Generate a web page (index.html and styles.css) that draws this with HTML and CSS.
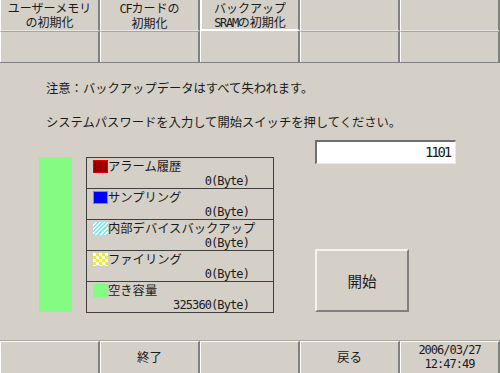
FILE: index.html
```html
<!DOCTYPE html>
<html lang="ja">
<head>
  <meta charset="UTF-8">
  <title>SRAMの初期化</title>
  <link rel="stylesheet" href="styles.css">
</head>
<body>
  <div class="screen">
    <div class="tabs">
      <div class="tab">ユーザーメモリ<br>の初期化</div>
      <div class="tab"><span class="latin">CF</span>カードの<br>初期化</div>
      <div class="tab active">バックアップ<br><span class="latin">SRAM</span>の初期化</div>
      <div class="tab"></div>
      <div class="tab"></div>
      <div class="tab sub"></div>
      <div class="tab sub"></div>
      <div class="tab sub active-sub"></div>
      <div class="tab sub"></div>
      <div class="tab sub"></div>
    </div>

    <div class="panel">
      <p class="note">注意：バックアップデータはすべて失われます。</p>
      <p class="note second">システムパスワードを入力して開始スイッチを押してください。</p>

      <div class="content">
        <div class="usage">
          <div class="bar"></div>
          <div class="legend">
            <div class="row">
              <div class="label"><span class="swatch alarm"></span>アラーム履歴</div>
              <div class="value">0(Byte)</div>
            </div>
            <div class="row">
              <div class="label"><span class="swatch sampling"></span>サンプリング</div>
              <div class="value">0(Byte)</div>
            </div>
            <div class="row">
              <div class="label"><span class="swatch device"></span>内部デバイスバックアップ</div>
              <div class="value">0(Byte)</div>
            </div>
            <div class="row">
              <div class="label"><span class="swatch filing"></span>ファイリング</div>
              <div class="value">0(Byte)</div>
            </div>
            <div class="row">
              <div class="label"><span class="swatch free"></span>空き容量</div>
              <div class="value">325360(Byte)</div>
            </div>
          </div>
        </div>

        <div class="controls">
          <div class="password">1101</div>
          <button class="start">開始</button>
        </div>
      </div>
    </div>

    <div class="footer">
      <div class="cell"></div>
      <div class="cell">終了</div>
      <div class="cell"></div>
      <div class="cell">戻る</div>
      <div class="cell clock">2006/03/27<br>12:47:49</div>
    </div>
  </div>
</body>
</html>
```

FILE: styles.css
```css
:root {
  --panel: #d4d0c8;
  --shadow: #808080;
  --light: #ffffff;
  --line: #404040;
}
body {
  margin: 0;
  background: var(--panel);
  font-family: "Noto Sans CJK JP", sans-serif;
  color: #1a1a1a;
}
.screen {
  width: 500px;
  height: 373px;
  display: flex;
  flex-direction: column;
  overflow: hidden;
}

/* top tabs */
.tabs {
  display: grid;
  grid-template-columns: repeat(5, 100px);
  grid-template-rows: 31px 31px;
  border-bottom: 1px solid var(--shadow);
  height: 62px;
}
.tab {
  box-sizing: border-box;
  border-left: 1px solid var(--light);
  border-right: 2px solid var(--shadow);
  border-bottom: 1px solid #e8e6e2;
  text-align: center;
  font-size: 12px;
  line-height: 14px;
  padding-top: 1px;
}
.tab.sub {
  border-top: 1px solid #a8a5a0;
  border-bottom: none;
}
.tab.active {
  border-left: 2px solid var(--light);
  border-bottom: 2px solid var(--light);
}
.tab.active-sub {
  border-top: none;
}
.latin {
  font-family: "DejaVu Sans Mono", monospace;
  font-size: 12px;
  letter-spacing: -1.3px;
}

/* main panel */
.panel {
  flex: 1;
  padding-top: 17px;
}
.note {
  margin: 0 0 0 46px;
  font-size: 12.3px;
  line-height: 16px;
}
.note.second {
  margin-top: 18px;
}
.content {
  display: flex;
  align-items: flex-start;
  padding-left: 39px;
  gap: 41px;
}
.usage {
  display: flex;
  gap: 14px;
  margin-top: 27px;
}
.bar {
  width: 33px;
  height: 155px;
  background: #84fc84;
}
.legend {
  width: 186px;
  border: 1px solid var(--line);
}
.row {
  height: 30px;
  border-top: 1px solid var(--line);
  display: flex;
  flex-direction: column;
}
.row:first-child {
  border-top: none;
}
.label {
  display: flex;
  align-items: center;
  padding: 1px 0 0 6px;
  font-size: 12.3px;
  line-height: 14px;
  white-space: nowrap;
}
.value {
  margin-top: auto;
  text-align: right;
  padding-right: 24px;
  font-family: "DejaVu Sans Mono", monospace;
  font-size: 12px;
  line-height: 14px;
  letter-spacing: -0.9px;
}
.swatch {
  width: 15px;
  height: 13px;
  box-sizing: border-box;
  flex: none;
}
.alarm {
  border: 1px solid #e00000;
  background: repeating-linear-gradient(90deg, #a00000 0 1px, #5a0000 1px 2px);
}
.sampling {
  background: #0000ff;
  border: 1px solid #8080ff;
}
.device {
  background: repeating-linear-gradient(135deg, #70f0f0 0 1.5px, #ffffff 1.5px 3px);
}
.filing {
  background-color: #ffffff;
  background-image:
    linear-gradient(45deg, #f8f000 25%, transparent 25%, transparent 75%, #f8f000 75%),
    linear-gradient(45deg, #f8f000 25%, transparent 25%, transparent 75%, #f8f000 75%);
  background-size: 6px 6px;
  background-position: 0 0, 3px 3px;
}
.free {
  background: #84fc84;
}

/* right controls */
.controls {
  display: flex;
  flex-direction: column;
  margin-top: 10px;
}
.password {
  box-sizing: border-box;
  width: 141px;
  height: 24px;
  background: #fff;
  border-top: 2px solid #707070;
  border-left: 2px solid #707070;
  border-right: 1px solid #e8e8e8;
  border-bottom: 1px solid #e8e8e8;
  text-align: right;
  padding-right: 5px;
  font-family: "DejaVu Sans Mono", monospace;
  font-size: 14px;
  line-height: 21px;
  letter-spacing: -2.2px;
}
.start {
  margin-top: 85px;
  width: 94px;
  height: 63px;
  background: var(--panel);
  border-top: 2px solid #f4f3f0;
  border-left: 2px solid #f4f3f0;
  border-right: 2px solid var(--shadow);
  border-bottom: 2px solid var(--shadow);
  font-family: "Noto Sans CJK JP", sans-serif;
  font-size: 14.5px;
  color: #1a1a1a;
  padding: 0;
}

/* footer */
.footer {
  display: grid;
  grid-template-columns: repeat(5, 100px);
  height: 32px;
  border-top: 1px solid #a8a5a0;
}
.cell {
  box-sizing: border-box;
  border-top: 1px solid var(--light);
  border-left: 1px solid var(--light);
  border-right: 2px solid var(--shadow);
  text-align: center;
  font-size: 12.5px;
  line-height: 30px;
}
.cell.clock {
  font-family: "DejaVu Sans Mono", monospace;
  font-size: 12px;
  line-height: 14px;
  padding-top: 1px;
  letter-spacing: -1px;
}
```
